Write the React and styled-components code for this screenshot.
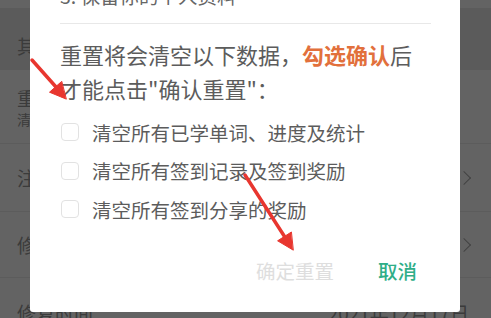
import styled, { createGlobalStyle } from "styled-components";

const GlobalStyle = createGlobalStyle`
  html, body {
    margin: 0;
    padding: 0;
    height: 100%;
    overflow: hidden;
  }
  body {
    font-family: "Noto Sans CJK SC", "Noto Sans", sans-serif;
  }
`;

const Screen = styled.div`
  position: relative;
  width: 491px;
  height: 318px;
  overflow: hidden;
  background: #fff;
`;

const Page = styled.div`
  display: flex;
  flex-direction: column;
`;

const TopStrip = styled.div`
  height: 8px;
  background: #fff;
`;

const SectionHeader = styled.div`
  height: 62px;
  display: flex;
  align-items: center;
  padding: 12px 17px 0;
  box-sizing: border-box;
  background: #ebebeb;
  color: #999;
  font-size: 19px;
`;

const Row = styled.div`
  height: ${(p) => p.$h}px;
  display: flex;
  align-items: ${(p) => (p.$top ? "flex-start" : "center")};
  justify-content: space-between;
  padding: ${(p) => (p.$top ? "23px" : "0")} 22px 0 17px;
  box-sizing: border-box;
  border-bottom: 1px solid #eee;
  color: #999;
`;

const RowText = styled.div`
  display: flex;
  flex-direction: column;
  gap: 0;
`;

const RowTitle = styled.span`
  font-size: 19px;
  line-height: 24px;
`;

const RowSub = styled.span`
  font-size: 14px;
  line-height: 18px;
`;

const RowValue = styled.span`
  font-size: 19px;
  line-height: 24px;
`;

const Chevron = styled.span`
  width: 9px;
  height: 9px;
  border-top: 1.5px solid #aaa;
  border-right: 1.5px solid #aaa;
  transform: rotate(45deg);
`;

const Dim = styled.div`
  position: absolute;
  inset: 0;
  background: rgba(0, 0, 0, 0.61);
`;

const Dialog = styled.div`
  position: absolute;
  left: 30px;
  top: -42px;
  width: 430px;
  height: 354px;
  box-sizing: border-box;
  padding: 24px 29px 0 30px;
  background: #fff;
  border-radius: 3px;
  display: flex;
  flex-direction: column;
`;

const Clause = styled.div`
  font-size: 19.5px;
  line-height: 28px;
  color: #666;
`;

const Divider = styled.div`
  height: 1px;
  background: #e8e8e8;
  margin-top: 13px;
`;

const Notice = styled.p`
  margin: 13px 0 0;
  font-size: 22px;
  line-height: 34px;
  color: #5c5c5c;
`;

const Strong = styled.b`
  color: #e2703c;
  font-weight: 700;
`;

const Options = styled.div`
  margin-top: 8px;
  display: flex;
  flex-direction: column;
`;

const Option = styled.label`
  height: 38.5px;
  display: flex;
  align-items: center;
  gap: 13px;
  padding-left: 1px;
  font-size: 19.5px;
  color: #5c5c5c;
`;

const Box = styled.span`
  width: 18px;
  height: 18px;
  box-sizing: border-box;
  border: 1.5px solid #e2e2e2;
  border-radius: 4px;
  background: #fff;
`;

const Actions = styled.div`
  margin-top: 21.75px;
  height: 40px;
  display: flex;
  align-items: center;
  justify-content: flex-end;
  gap: 16px;
`;

const Action = styled.button`
  height: 40px;
  padding: 0 14px;
  border: none;
  background: none;
  font-family: inherit;
  font-size: 19.5px;
  font-weight: ${(p) => (p.$primary ? 500 : 400)};
  color: ${(p) => (p.$primary ? "#2fae88" : "#dedede")};
`;

const Marks = styled.svg`
  position: absolute;
  inset: 0;
  pointer-events: none;
`;

const options = [
  "清空所有已学单词、进度及统计",
  "清空所有签到记录及签到奖励",
  "清空所有签到分享的奖励",
];

export default function App() {
  return (
    <>
      <GlobalStyle />
      <Screen>
        <Page>
          <TopStrip />
          <SectionHeader>其他</SectionHeader>
          <Row $h={74}>
            <RowText>
              <RowTitle>重置学习数据</RowTitle>
              <RowSub>清空所有学习记录</RowSub>
            </RowText>
          </Row>
          <Row $h={68}>
            <RowTitle>注销账号</RowTitle>
            <Chevron />
          </Row>
          <Row $h={66}>
            <RowTitle>修改密码</RowTitle>
            <Chevron />
          </Row>
          <Row $h={70} $top>
            <RowTitle>修复时间</RowTitle>
            <RowValue>2021年12月17日</RowValue>
          </Row>
        </Page>
        <Dim />
        <Dialog>
          <Clause>3. 保留你的个人资料</Clause>
          <Divider />
          <Notice>
            重置将会清空以下数据，<Strong>勾选确认</Strong>后
            <br />
            才能点击"确认重置"：
          </Notice>
          <Options>
            {options.map((t) => (
              <Option key={t}>
                <Box />
                {t}
              </Option>
            ))}
          </Options>
          <Actions>
            <Action>确定重置</Action>
            <Action $primary>取消</Action>
          </Actions>
        </Dialog>
        <Marks width="491" height="318" viewBox="0 0 491 318">
          <g fill="#e8362f" stroke="#e8362f" strokeLinecap="round">
            <line x1="32" y1="60" x2="56" y2="87" strokeWidth="3.5" />
            <polygon points="66,99 49.5,92.2 61.5,81.6" strokeWidth="1" />
            <line x1="245" y1="175" x2="284.5" y2="236.5" strokeWidth="3.5" />
            <polygon points="293,250 277.6,240.8 291.1,232.2" strokeWidth="1" />
          </g>
        </Marks>
      </Screen>
    </>
  );
}
